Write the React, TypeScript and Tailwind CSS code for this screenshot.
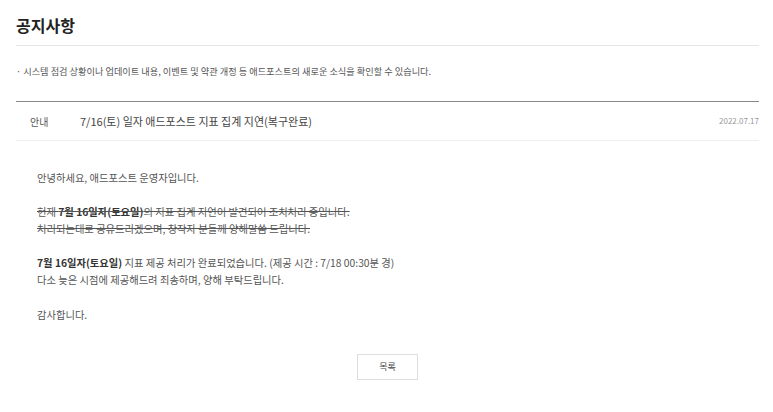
import React from 'react';

const FONT = { fontFamily: '"Noto Sans CJK KR", "Noto Sans", sans-serif' };

export default function App() {
  return (
    <div className="w-[773px] h-[412px] bg-white pl-4 pr-[14px] text-[#333]" style={FONT}>
      <h1 className="pt-[15px] pb-[10px] text-[16px] leading-[20px] font-bold text-[#222] border-b border-[#e5e5e5]">
        공지사항
      </h1>

      <p className="mt-[18px] text-[9.2px] leading-[14px] text-[#555]">
        · 시스템 점검 상황이나 업데이트 내용, 이벤트 및 약관 개정 등 애드포스트의 새로운 소식을 확인할 수 있습니다.
      </p>

      <div className="mt-[23px] border-t border-[#888]">
        <div className="flex items-center h-[39px] border-b border-[#eee]">
          <span className="w-[64px] pl-[14px] text-[10px] text-[#555]">안내</span>
          <span className="flex-1 text-[11px] text-[#444]">
            7/16(토) 일자 애드포스트 지표 집계 지연(복구완료)
          </span>
          <span className="text-[8px] text-[#999]">2022.07.17</span>
        </div>

        <div className="pl-[21px] pt-[28px] text-[10.3px] leading-[17.5px] text-[#555]">
          <p>안녕하세요, 애드포스트 운영자입니다.</p>
          <p className="mt-[16px] line-through">
            현재 <b className="text-[#333]">7월 16일자(토요일)</b>의 지표 집계 지연이 발견되어 조치처리 중입니다.
          </p>
          <p className="line-through">처리되는대로 공유드리겠으며, 창작자 분들께 양해말씀 드립니다.</p>
          <p className="mt-[16px]">
            <b className="text-[#333]">7월 16일자(토요일)</b> 지표 제공 처리가 완료되었습니다. (제공 시간 : 7/18 00:30분 경)
          </p>
          <p>다소 늦은 시점에 제공해드려 죄송하며, 양해 부탁드립니다.</p>
          <p className="mt-[17px]">감사합니다.</p>
        </div>

        <div className="flex justify-center mt-[31px]">
          <button className="w-[61px] h-[26px] border border-[#ddd] bg-white text-[9px] text-[#444]">
            목록
          </button>
        </div>
      </div>
    </div>
  );
}
